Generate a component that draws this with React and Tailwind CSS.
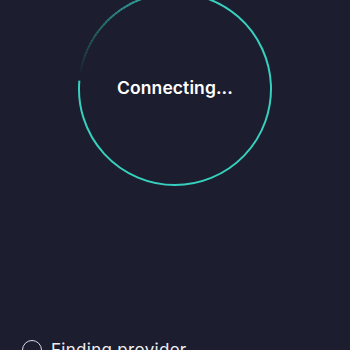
import React from 'react';

const R = 96;
const C = 98;

const arcPath = (a0, a1) => {
  const r0 = (a0 * Math.PI) / 180;
  const r1 = (a1 * Math.PI) / 180;
  const x0 = C + R * Math.cos(r0);
  const y0 = C + R * Math.sin(r0);
  const x1 = C + R * Math.cos(r1);
  const y1 = C + R * Math.sin(r1);
  const large = Math.abs(a1 - a0) > 180 ? 1 : 0;
  return `M ${x0} ${y0} A ${R} ${R} 0 ${large} 1 ${x1} ${y1}`;
};

const Spinner = () => {
  // solid part from 265deg clockwise round to 545 (=185deg), fade from 185 to 265
  const fade = [];
  const steps = 40;
  for (let i = 0; i < steps; i++) {
    const a0 = 186 + (i * 80) / steps;
    const a1 = 186 + ((i + 1) * 80) / steps + 0.3;
    fade.push(<path key={i} d={arcPath(a0, a1)} stroke="#37d0be" strokeWidth="2" fill="none" opacity={(i / steps) * 0.9} />);
  }
  return (
    <svg width="196" height="196" viewBox="0 0 196 196" className="absolute inset-0">
      <path d={arcPath(265, 450)} stroke="#37d0be" strokeWidth="2" fill="none" />
      <path d={arcPath(90, 185)} stroke="#37d0be" strokeWidth="2" fill="none" />
      {fade}
    </svg>
  );
};

export default function App() {
  return (
    <div className="w-[350px] h-[350px] overflow-hidden bg-[#1c1d2e] flex flex-col" style={{ fontFamily: 'Inter, "Open Sans", sans-serif' }}>
      <div className="flex justify-center mt-[-9px]">
        <div className="relative w-[196px] h-[196px] flex items-center justify-center">
          <Spinner />
          <span className="text-white text-[17.5px] font-semibold tracking-[0.1px] pb-[1px]">Connecting...</span>
        </div>
      </div>
      <div className="mt-auto flex items-center gap-[9px] pl-[22px] mb-[-13px]">
        <div className="w-[20px] h-[20px] rounded-full border-[1.5px] border-[#d8d9e0]" />
        <span className="text-[#eeeef2] text-[17px] tracking-[0.3px]">Finding provider</span>
      </div>
    </div>
  );
}
